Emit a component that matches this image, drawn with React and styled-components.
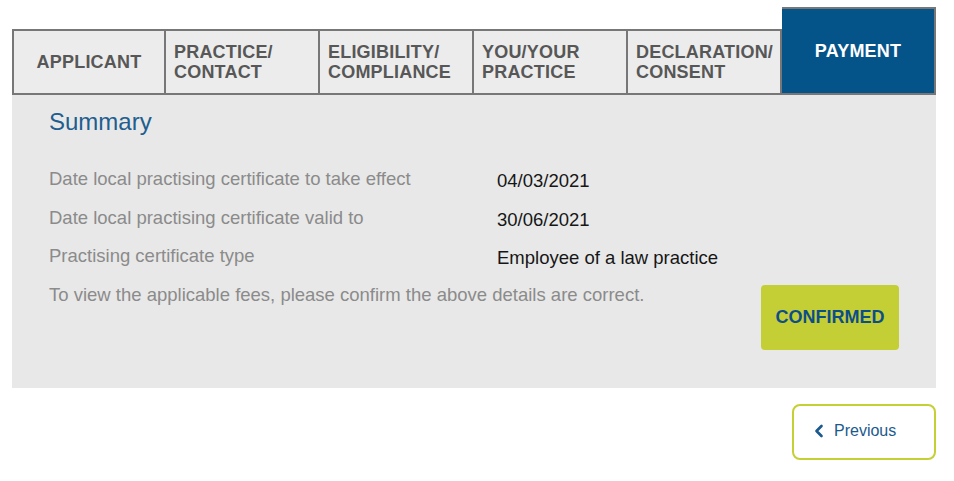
import React from "react";
import styled, { createGlobalStyle } from "styled-components";
import { ChevronLeft } from "lucide-react";

const GlobalStyle = createGlobalStyle`
  body {
    margin: 0;
    background: #ffffff;
    font-family: "Liberation Sans", Arial, sans-serif;
  }
`;

const tabs = [
  { label: "APPLICANT", centered: true },
  { label: ["PRACTICE/", "CONTACT"] },
  { label: ["ELIGIBILITY/", "COMPLIANCE"] },
  { label: ["YOU/YOUR", "PRACTICE"] },
  { label: ["DECLARATION/", "CONSENT"] },
  { label: "PAYMENT", active: true, centered: true },
];

const rows = [
  ["Date local practising certificate to take effect", "04/03/2021"],
  ["Date local practising certificate valid to", "30/06/2021"],
  ["Practising certificate type", "Employee of a law practice"],
];

function App() {
  return (
    <>
      <GlobalStyle />
      <Page>
        <TabBar>
          {tabs.map((t, i) => (
            <Tab key={i} $active={t.active} $centered={t.centered} $first={i === 0}>
              {Array.isArray(t.label) ? (
                <span>
                  {t.label[0]}
                  <br />
                  {t.label[1]}
                </span>
              ) : (
                <span>{t.label}</span>
              )}
            </Tab>
          ))}
        </TabBar>
        <Panel>
          <Title>Summary</Title>
          <Rows>
            {rows.map(([label, value]) => (
              <React.Fragment key={label}>
                <Label>{label}</Label>
                <Value>{value}</Value>
              </React.Fragment>
            ))}
          </Rows>
          <ConfirmRow>
            <Label>To view the applicable fees, please confirm the above details are correct.</Label>
            <ConfirmButton>CONFIRMED</ConfirmButton>
          </ConfirmRow>
        </Panel>
        <Footer>
          <PrevButton>
            <ChevronLeft size={20} strokeWidth={3.2} />
            Previous
          </PrevButton>
        </Footer>
      </Page>
    </>
  );
}

export default App;

const Page = styled.div`
  width: 924px;
  padding: 7px 0 0 12px;
`;

const TabBar = styled.div`
  display: flex;
  align-items: flex-end;
  height: 88px;
`;

const Tab = styled.div`
  box-sizing: border-box;
  width: 154px;
  height: ${(p) => (p.$active ? "88px" : "66px")};
  display: flex;
  align-items: center;
  justify-content: ${(p) => (p.$centered ? "center" : "flex-start")};
  padding: ${(p) => (p.$centered ? "0" : "0 0 0 8px")};
  border-top: 2px solid #777777;
  border-bottom: 2px solid #777777;
  border-right: 2px solid #777777;
  border-left: ${(p) => (p.$first ? "2px solid #777777" : "none")};
  background: ${(p) => (p.$active ? "#04548a" : "#ececec")};
  color: ${(p) => (p.$active ? "#ffffff" : "#575757")};
  font-size: 18px;
  font-weight: bold;
  letter-spacing: 0.2px;
  line-height: 20px;
  text-align: left;
`;

const Panel = styled.div`
  background: #e8e8e8;
  padding: 13px 37px 38px 37px;
`;

const Title = styled.h2`
  margin: 0;
  font-size: 24px;
  font-weight: normal;
  line-height: 28px;
  color: #215e8f;
`;

const Rows = styled.div`
  display: grid;
  grid-template-columns: 448px 1fr;
  row-gap: 15.5px;
  margin-top: 32px;
`;

const Label = styled.div`
  font-size: 18.5px;
  line-height: 21px;
  color: #8b8b8b;
`;

const Value = styled.div`
  font-size: 18.5px;
  line-height: 21px;
  padding-top: 2px;
  color: #161616;
`;

const ConfirmRow = styled.div`
  display: flex;
  justify-content: space-between;
  align-items: flex-start;
  margin-top: 15.5px;
`;

const ConfirmButton = styled.button`
  width: 138px;
  height: 65px;
  margin-top: 1px;
  border: none;
  border-radius: 4px;
  background: #c4cf35;
  color: #0c4e8a;
  font-family: "Liberation Sans", Arial, sans-serif;
  font-size: 18px;
  font-weight: bold;
  cursor: pointer;
`;

const Footer = styled.div`
  display: flex;
  justify-content: flex-end;
  margin-top: 16px;
`;

const PrevButton = styled.button`
  box-sizing: border-box;
  width: 144px;
  height: 56px;
  display: flex;
  align-items: center;
  justify-content: flex-start;
  gap: 5px;
  padding: 0 0 2px 15px;
  border: 2px solid #c5d034;
  border-radius: 8px;
  background: #ffffff;
  color: #1c5a8d;
  font-family: "Liberation Sans", Arial, sans-serif;
  font-size: 16px;
  cursor: pointer;
`;
